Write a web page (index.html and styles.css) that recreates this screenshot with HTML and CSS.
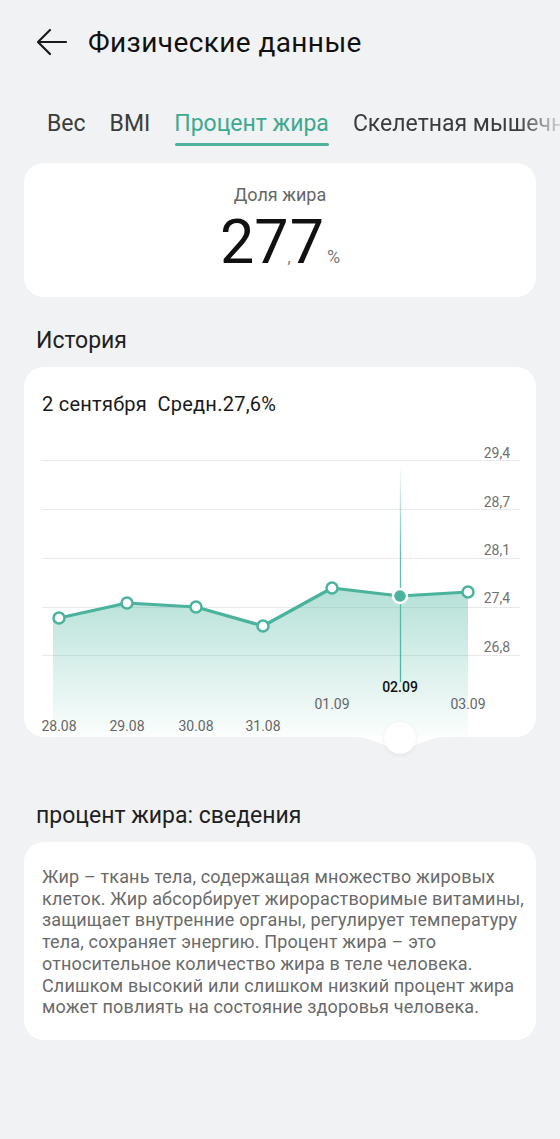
FILE: index.html
```html
<!DOCTYPE html>
<html lang="ru">
<head>
  <meta charset="UTF-8" />
  <meta name="viewport" content="width=device-width, initial-scale=1" />
  <title>Физические данные</title>
  <link rel="stylesheet" href="styles.css">
</head>
<body>
  <div class="topbar">
    <svg class="back" width="32" height="28" viewBox="0 0 32 28">
      <path d="M30 14H3M14 2L2 14l12 12" fill="none" stroke="#1a1a1a" stroke-width="2.2" stroke-linecap="round" stroke-linejoin="round"/>
    </svg>
    <h1>Физические данные</h1>
  </div>

  <div class="tabs">
    <span class="tab">Вес</span>
    <span class="tab">BMI</span>
    <span class="tab active">Процент жира</span>
    <span class="tab last">Скелетная мышечная</span>
  </div>

  <div class="card summary">
    <div class="summary-label">Доля жира</div>
    <div class="summary-value">27<span class="comma">,</span>7<span class="unit">%</span></div>
  </div>

  <h2 class="section-title">История</h2>

  <div class="card chart-card">
    <div class="chart-head">2 сентября&nbsp;&nbsp;Средн.27,6%</div>
    <svg class="chart" width="512" height="300" viewBox="0 0 512 300">
      <defs>
        <linearGradient id="fill" x1="0" y1="150" x2="0" y2="300" gradientUnits="userSpaceOnUse">
          <stop offset="0" stop-color="#4db6a0" stop-opacity="0.42"/>
          <stop offset="1" stop-color="#4db6a0" stop-opacity="0.02"/>
        </linearGradient>
        <linearGradient id="vline" x1="0" y1="28" x2="0" y2="245" gradientUnits="userSpaceOnUse">
          <stop offset="0" stop-color="#4db6a0" stop-opacity="0"/>
          <stop offset="0.4" stop-color="#4db6a0" stop-opacity="0.85"/>
          <stop offset="1" stop-color="#4db6a0" stop-opacity="1"/>
        </linearGradient>
      </defs>

      <g class="grid">
        <line x1="18" y1="23.5" x2="496" y2="23.5"/>
        <line x1="18" y1="72.5" x2="496" y2="72.5"/>
        <line x1="18" y1="121.5" x2="496" y2="121.5"/>
        <line x1="18" y1="170.5" x2="496" y2="170.5"/>
        <line x1="18" y1="218.5" x2="496" y2="218.5"/>
      </g>
      <g class="ylabels">
        <text x="486" y="21">29,4</text>
        <text x="486" y="70">28,7</text>
        <text x="486" y="118">28,1</text>
        <text x="486" y="166">27,4</text>
        <text x="486" y="215">26,8</text>
      </g>

      <polygon points="29,182.5 35,181 103,166 172,170 239,189 308,151 376,159 444,155 444,300 29,300" fill="url(#fill)"/>
      <line x1="376.5" y1="28" x2="376.5" y2="245" stroke="url(#vline)" stroke-width="1.3"/>
      <polyline points="35,181 103,166 172,170 239,189 308,151 376,159 444,155" fill="none" stroke="#4bb39c" stroke-width="3.2" stroke-linejoin="round"/>

      <g class="dots">
        <circle cx="35" cy="181" r="5.5"/>
        <circle cx="103" cy="166" r="5.5"/>
        <circle cx="172" cy="170" r="5.5"/>
        <circle cx="239" cy="189" r="5.5"/>
        <circle cx="308" cy="151" r="5.5"/>
        <circle cx="444" cy="155" r="5.5"/>
      </g>
      <circle cx="376" cy="159" r="7" fill="#4bb39c" stroke="#fff" stroke-width="2.5"/>

      <g class="xlabels">
        <text x="35" y="294">28.08</text>
        <text x="103" y="294">29.08</text>
        <text x="172" y="294">30.08</text>
        <text x="239" y="294">31.08</text>
        <text x="308" y="272">01.09</text>
        <text x="376" y="255" class="current">02.09</text>
        <text x="444" y="272">03.09</text>
      </g>
    </svg>
    <div class="knob">
      <svg width="110" height="20" viewBox="0 0 110 20">
        <path d="M0 0C30 0 36 12 55 12S80 0 110 0Z" fill="#fff"/>
      </svg>
      <span class="knob-dot"></span>
    </div>
  </div>

  <h2 class="section-title info-title">процент жира: сведения</h2>

  <div class="card info">
    Жир – ткань тела, содержащая множество жировых<br>
    клеток. Жир абсорбирует жирорастворимые витамины,<br>
    защищает внутренние органы, регулирует температуру<br>
    тела, сохраняет энергию. Процент жира – это<br>
    относительное количество жира в теле человека.<br>
    Слишком высокий или слишком низкий процент жира<br>
    может повлиять на состояние здоровья человека.
  </div>
</body>
</html>
```

FILE: styles.css
```css
body {
  margin: 0;
  background: #f1f2f4;
  font-family: Roboto, "Noto Sans", sans-serif;
  color: #1a1a1a;
  overflow-x: hidden;
}
.topbar {
  height: 84px;
  display: flex;
  align-items: center;
  gap: 20px;
  padding: 0 36px;
}
.back {
  flex: none;
}
h1 {
  margin: 0;
  font-size: 28px;
  letter-spacing: 0.4px;
  font-weight: 400;
  color: #111;
}
.tabs {
  display: flex;
  gap: 24px;
  padding: 26px 0 0 47px;
  white-space: nowrap;
  overflow: hidden;
}
.tab {
  position: relative;
  font-size: 23px;
  line-height: 28px;
  padding-bottom: 8px;
  color: #3c3c3c;
  flex: none;
}
.tab.active {
  color: #3ea98f;
}
.tab.active::after {
  content: "";
  position: absolute;
  left: 1px;
  right: 0;
  bottom: 0;
  height: 3px;
  border-radius: 2px;
  background: #4db29b;
}
.tab.last {
  -webkit-mask-image: linear-gradient(90deg, #000 165px, transparent 215px);
}
.card {
  background: #fff;
  border-radius: 20px;
  margin: 0 24px;
}
.summary {
  margin-top: 17px;
  height: 134px;
  box-sizing: border-box;
  padding-top: 20px;
  text-align: center;
}
.summary-label {
  font-size: 18px;
  line-height: 24px;
  color: #666;
}
.summary-value {
  font-size: 61px;
  line-height: 70px;
  font-weight: 400;
  color: #111;
}
.comma {
  font-size: 16px;
  color: #777;
  margin: 0 -1px;
}
.unit {
  font-size: 18px;
  color: #777;
  margin-left: 3px;
}
.section-title {
  margin: 30px 0 12px 36px;
  font-size: 23px;
  line-height: 28px;
  font-weight: 400;
  color: #1f1f1f;
}
.chart-card {
  position: relative;
  height: 370px;
}
.chart-head {
  padding: 25px 0 0 18px;
  font-size: 20px;
  letter-spacing: 0.25px;
  line-height: 24px;
  height: 45px;
  color: #1a1a1a;
}
.chart {
  display: block;
}
.grid line {
  stroke: #e9e9e9;
  stroke-width: 1;
}
.ylabels text {
  font-family: Roboto, sans-serif;
  font-size: 14px;
  fill: #707070;
  text-anchor: end;
}
.xlabels text {
  font-family: Roboto, sans-serif;
  font-size: 14px;
  fill: #666;
  text-anchor: middle;
}
.xlabels .current {
  fill: #111;
  font-weight: 500;
}
.dots circle {
  fill: #fff;
  stroke: #4bb39c;
  stroke-width: 2.5;
}
.knob {
  position: absolute;
  left: 321px;
  top: 369px;
  width: 110px;
  height: 20px;
}
.knob svg {
  display: block;
}
.knob-dot {
  position: absolute;
  left: 39px;
  top: -14px;
  width: 32px;
  height: 32px;
  border-radius: 50%;
  background: #fff;
  box-shadow: 0 1px 4px rgba(0, 0, 0, 0.07);
}
.info-title {
  margin-top: 65px;
}
.info {
  padding: 24px 18px 22px;
  font-size: 18px;
  letter-spacing: 0.15px;
  line-height: 21.7px;
  color: #6a6a6a;
  white-space: nowrap;
}
```
